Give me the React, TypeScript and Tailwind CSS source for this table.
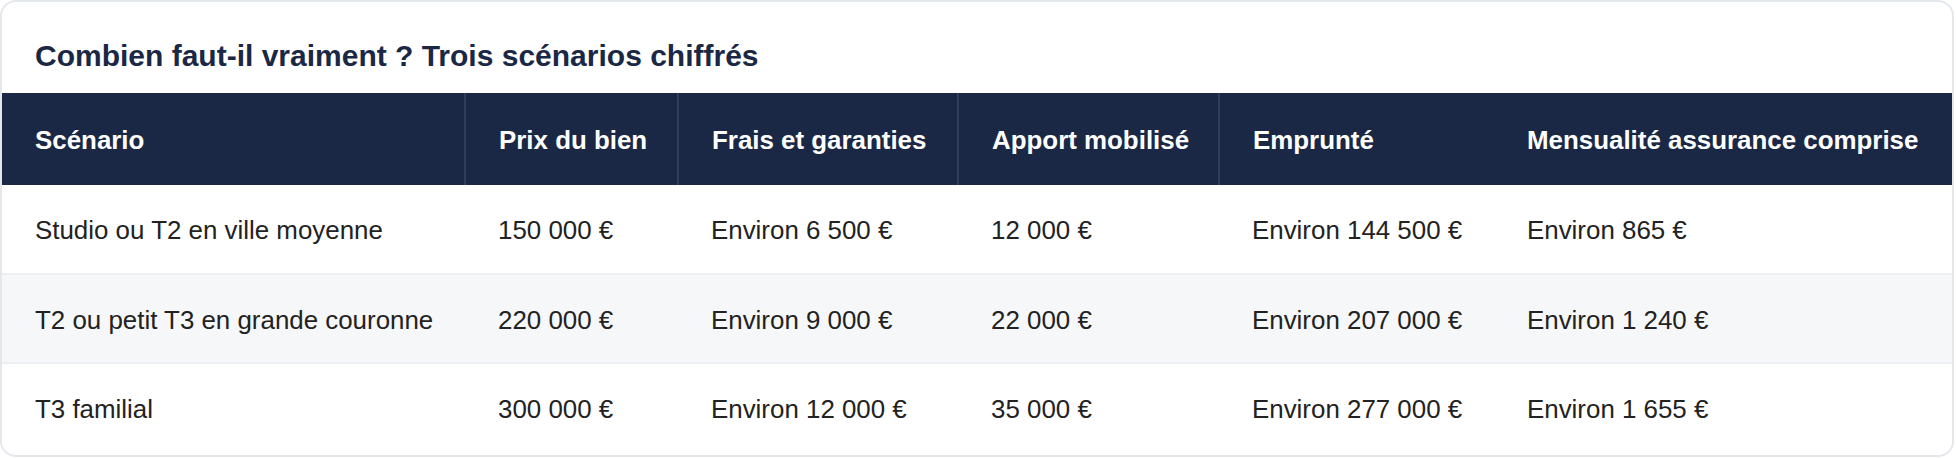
const headers = [
  "Scénario",
  "Prix du bien",
  "Frais et garanties",
  "Apport mobilisé",
  "Emprunté",
  "Mensualité assurance comprise",
];

const rows = [
  ["Studio ou T2 en ville moyenne", "150 000 €", "Environ 6 500 €", "12 000 €", "Environ 144 500 €", "Environ 865 €"],
  ["T2 ou petit T3 en grande couronne", "220 000 €", "Environ 9 000 €", "22 000 €", "Environ 207 000 €", "Environ 1 240 €"],
  ["T3 familial", "300 000 €", "Environ 12 000 €", "35 000 €", "Environ 277 000 €", "Environ 1 655 €"],
];

export default function App() {
  return (
    <div className="w-[1956px] h-[458px] bg-white font-['Liberation_Sans',Arial,sans-serif]">
      <div className="w-[1954px] h-[457px] border-2 border-[#e4e7eb] rounded-[16px] overflow-hidden bg-white">
        {/* Title */}
        <h2 className="pl-[33px] pt-[36px] pb-[19px] text-[30px] leading-[36px] font-bold text-[#1b2845]">
          Combien faut-il vraiment ? Trois scénarios chiffrés
        </h2>

        {/* Table */}
        <table className="w-full border-collapse table-fixed">
          <colgroup>
            <col className="w-[463px]" />
            <col className="w-[213px]" />
            <col className="w-[280px]" />
            <col className="w-[261px]" />
            <col className="w-[275px]" />
            <col />
          </colgroup>
          <thead>
            <tr className="bg-[#1b2845] h-[92px]">
              {headers.map((h, i) => (
                <th
                  key={h}
                  className={`text-left align-middle pl-[33px] pt-[2px] text-[25.9px] font-bold text-white whitespace-nowrap ${
                    i < 4 ? "border-r-2 border-white/10" : ""
                  }`}
                >
                  {h}
                </th>
              ))}
            </tr>
          </thead>
          <tbody>
            {rows.map((r, ri) => (
              <tr
                key={ri}
                className={`${ri === 1 ? "bg-[#f6f7f9]" : "bg-white"} ${
                  ri < rows.length - 1 ? "border-b-2 border-[#eceef1]" : ""
                } h-[89px]`}
              >
                {r.map((c, ci) => (
                  <td
                    key={ci}
                    className="pl-[33px] pt-[3px] align-middle text-[25.9px] text-[#222222] whitespace-nowrap"
                  >
                    {c}
                  </td>
                ))}
              </tr>
            ))}
          </tbody>
        </table>
      </div>
    </div>
  );
}
